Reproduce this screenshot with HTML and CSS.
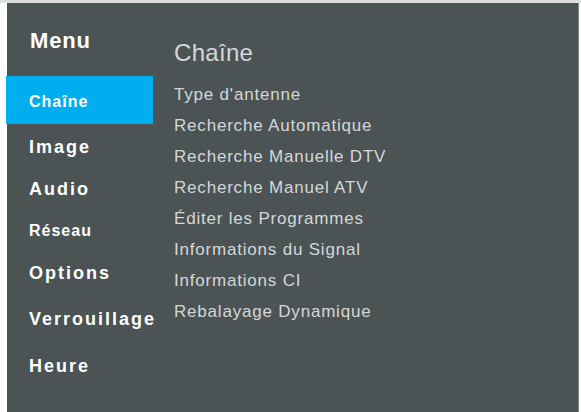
FILE: index.html
```html
<!DOCTYPE html>
<html lang="fr">
<head>
<meta charset="utf-8">
<title>Menu</title>
<link rel="stylesheet" href="styles.css">
</head>
<body>
<div class="panel">
  <nav class="sidebar">
    <div class="sidebar-title">Menu</div>
    <div class="nav-item nav-item--active">Chaîne</div>
    <div class="nav-list">
      <div class="nav-item">Image</div>
      <div class="nav-item">Audio</div>
      <div class="nav-item nav-item--small">Réseau</div>
      <div class="nav-item">Options</div>
      <div class="nav-item nav-item--tall nav-item--spaced">Verrouillage</div>
      <div class="nav-item nav-item--tall">Heure</div>
    </div>
  </nav>
  <section class="content">
    <div class="content-title">Chaîne</div>
    <ul class="options">
      <li>Type d'antenne</li>
      <li>Recherche Automatique</li>
      <li>Recherche Manuelle DTV</li>
      <li>Recherche Manuel ATV</li>
      <li>Éditer les Programmes</li>
      <li>Informations du Signal</li>
      <li>Informations CI</li>
      <li>Rebalayage Dynamique</li>
    </ul>
  </section>
</div>
</body>
</html>
```
FILE: styles.css
```css
html, body {
  margin: 0;
  padding: 0;
  height: 100%;
}
body {
  background: #ffffff;
  border-top: 3px solid #dcdedd;
  box-sizing: border-box;
  font-family: "Liberation Sans", Arial, sans-serif;
  overflow: hidden;
}
.panel {
  margin: 0 2px 0 7px;
  height: 409px;
  background: #4b5354;
  display: flex;
  border-right: 1px solid #7c8382;
}
.sidebar {
  width: 146px;
  flex: none;
  display: flex;
  flex-direction: column;
  padding-top: 25px;
}
.sidebar-title {
  height: 26px;
  line-height: 26px;
  font-size: 22px;
  font-weight: bold;
  letter-spacing: 0.8px;
  color: #ffffff;
  padding-left: 23px;
  margin-bottom: 22px;
}
.nav-item {
  height: 42px;
  line-height: 42px;
  font-size: 18px;
  font-weight: bold;
  letter-spacing: 2px;
  color: #ffffff;
  padding-left: 22px;
  white-space: nowrap;
}
.nav-item--small {
  font-size: 16px;
  letter-spacing: 1px;
}
.nav-item--tall {
  height: 47px;
  line-height: 47px;
}
.nav-item--spaced {
  margin-top: 2px;
}
.nav-item--active {
  background: #00adef;
  height: 45px;
  line-height: 45px;
  padding-top: 3px;
  font-size: 16px;
  letter-spacing: 1px;
  margin-left: -1px;
  padding-left: 23px;
}
.nav-list {
  padding-top: 2px;
  display: flex;
  flex-direction: column;
}
.content {
  flex: 1;
  padding-left: 21px;
  padding-top: 36px;
  color: #d4d8d8;
}
.content-title {
  height: 28px;
  line-height: 28px;
  font-size: 24px;
  letter-spacing: 0.3px;
  margin-bottom: 12px;
}
.options {
  list-style: none;
  margin: 0;
  padding: 0;
}
.options li {
  height: 31px;
  line-height: 31px;
  font-size: 17px;
  letter-spacing: 0.8px;
  white-space: nowrap;
}
```
